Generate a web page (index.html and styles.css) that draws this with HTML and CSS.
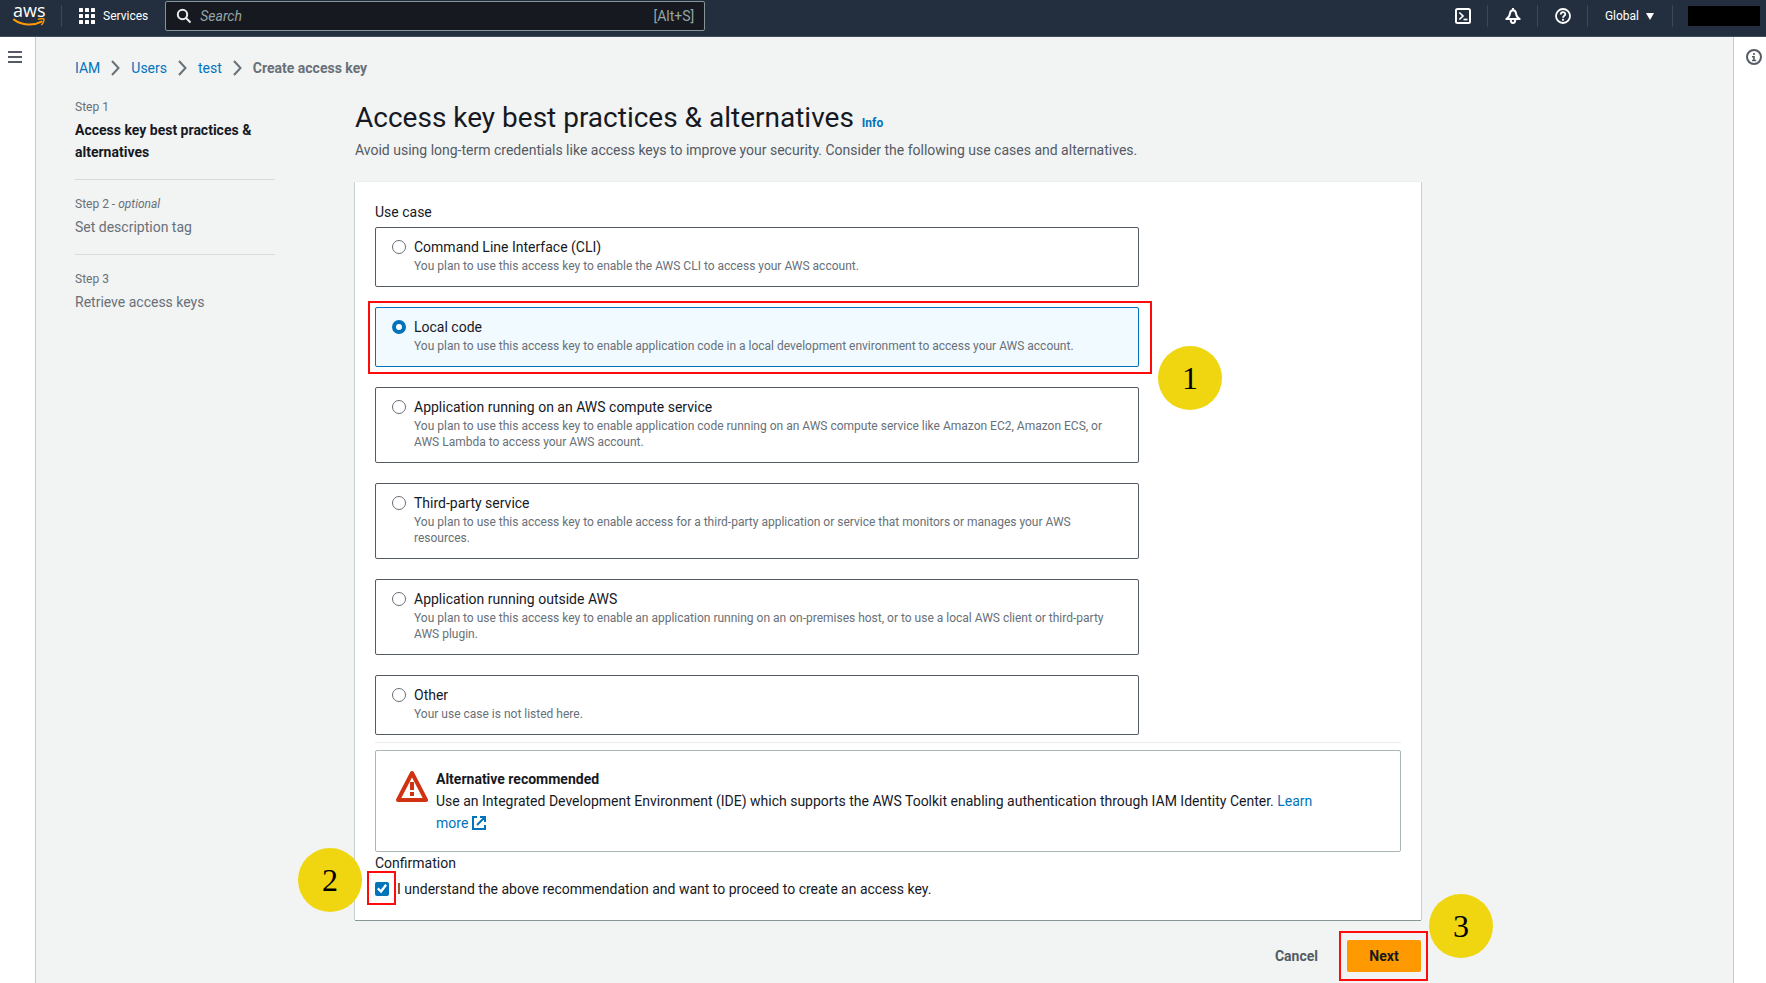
FILE: index.html
```html
<!DOCTYPE html>
<html lang="en">
<head>
<meta charset="utf-8">
<meta name="viewport" content="width=device-width, initial-scale=1">
<title>Create access key | IAM</title>
<link rel="stylesheet" href="styles.css">
</head>
<body>
<header class="topbar">
  <a class="logo" href="#" aria-label="aws home">
    <span class="logo-text">aws</span>
    <svg class="logo-smile" width="32" height="9" viewBox="0 0 32 9" aria-hidden="true"><path d="M1 1.600C9 7.600 20.500 8 28.500 3.600" fill="none" stroke="#ff9900" stroke-width="2" stroke-linecap="round"/><path d="M25.500 1.200C28 .4 30.500.5 31 1.100C31.300 2.500 30 5.400 28.600 6.600" fill="none" stroke="#ff9900" stroke-width="1.400" stroke-linecap="round"/></svg>
  </a>
  <button class="services" type="button">
    <svg width="16" height="16" viewBox="0 0 16 16" fill="#fff" aria-hidden="true"><rect width="4" height="4" rx=".6"/><rect x="6" width="4" height="4" rx=".6"/><rect x="12" width="4" height="4" rx=".6"/><rect y="6" width="4" height="4" rx=".6"/><rect x="6" y="6" width="4" height="4" rx=".6"/><rect x="12" y="6" width="4" height="4" rx=".6"/><rect y="12" width="4" height="4" rx=".6"/><rect x="6" y="12" width="4" height="4" rx=".6"/><rect x="12" y="12" width="4" height="4" rx=".6"/></svg>
    <span>Services</span>
  </button>
  <label class="search">
    <svg width="16" height="16" viewBox="0 0 16 16" fill="none" stroke="#eaeded" stroke-width="2" aria-hidden="true"><circle cx="6.500" cy="6.500" r="4.700"/><path d="M10 10l4.500 4.500"/></svg>
    <input class="search-input" type="search" placeholder="Search" aria-label="Search">
    <span class="search-key">[Alt+S]</span>
  </label>
  <nav class="tools">
    <button class="tool" type="button" aria-label="CloudShell"><svg width="16" height="16" viewBox="0 0 16 16" fill="none" stroke="#fff" stroke-width="2"><rect x="1" y="1" width="14" height="14" rx="1.500"/><path d="M4.300 4.500L8 8l-3.700 3.500" stroke-width="1.700"/><path d="M8.500 11.500h4" stroke-width="1.700"/></svg></button>
    <button class="tool" type="button" aria-label="Notifications"><svg width="16" height="16" viewBox="0 0 16 16" fill="none" stroke="#fff" stroke-width="2" stroke-linejoin="round"><path d="M8 0v2"/><path d="M1.300 11C3.800 9.500 4.600 8 4.900 5.800C5.200 3.400 6.200 2.300 8 2.300S10.800 3.400 11.100 5.800C11.400 8 12.200 9.500 14.700 11z"/><path d="M5.800 12c0 4 4.400 4 4.400 0"/></svg></button>
    <button class="tool" type="button" aria-label="Help"><svg width="16" height="16" viewBox="0 0 16 16" fill="none" stroke="#fff" stroke-width="1.800"><circle cx="8" cy="8" r="7"/><path d="M5.700 6.500C5.700 3.300 10.300 3.300 10.300 6.200C10.300 7.800 8 7.600 8 9.700"/><path d="M8 10.800v1.900"/></svg></button>
    <button class="tool region" type="button"><span>Global</span><svg width="8" height="7" viewBox="0 0 8 7" fill="#fff" aria-hidden="true"><path d="M0 0h8L4 7z"/></svg></button>
    <span class="account"></span>
  </nav>
</header>
<div class="shell">
  <aside class="rail rail-left">
    <button class="icon-button" type="button" aria-label="Open navigation"><svg width="14" height="12" viewBox="0 0 14 12" stroke="#545b64" stroke-width="2"><path d="M0 1h14M0 6h14M0 11h14"/></svg></button>
  </aside>
  <main class="content">
    <nav class="crumbs" aria-label="Breadcrumbs">
      <a href="#">IAM</a>
      <svg class="chevron" width="9" height="16" viewBox="0 0 9 16"><path d="M1 1l6.500 7L1 15"/></svg>
      <a href="#">Users</a>
      <svg class="chevron" width="9" height="16" viewBox="0 0 9 16"><path d="M1 1l6.500 7L1 15"/></svg>
      <a href="#">test</a>
      <svg class="chevron" width="9" height="16" viewBox="0 0 9 16"><path d="M1 1l6.500 7L1 15"/></svg>
      <span class="crumb-current">Create access key</span>
    </nav>
    <div class="wizard">
      <ol class="steps">
        <li class="step step-active"><span class="step-no">Step 1</span><span class="step-name">Access key best practices &amp; alternatives</span></li>
        <li class="step"><span class="step-no">Step 2 - <i>optional</i></span><span class="step-name">Set description tag</span></li>
        <li class="step"><span class="step-no">Step 3</span><span class="step-name">Retrieve access keys</span></li>
      </ol>
      <form class="form">
        <div class="heading">
          <h1 class="title">Access key best practices &amp; alternatives</h1>
          <a class="info" href="#">Info</a>
        </div>
        <p class="subtitle">Avoid using long-term credentials like access keys to improve your security. Consider the following use cases and alternatives.</p>
        <section class="panel">
          <fieldset class="cases">
            <legend class="legend">Use case</legend>
            <div class="tiles">
              <label class="tile"><input class="radio" type="radio" name="case"><span class="tile-name">Command Line Interface (CLI)</span><span class="tile-text">You plan to use this access key to enable the AWS CLI to access your AWS account.</span></label>
              <label class="tile tile-selected"><input class="radio" type="radio" name="case" checked><span class="tile-name">Local code</span><span class="tile-text">You plan to use this access key to enable application code in a local development environment to access your AWS account.</span><span class="mark mark-tile"></span><span class="badge badge-one">1</span></label>
              <label class="tile"><input class="radio" type="radio" name="case"><span class="tile-name">Application running on an AWS compute service</span><span class="tile-text">You plan to use this access key to enable application code running on an AWS compute service like Amazon EC2, Amazon ECS, or<br>AWS Lambda to access your AWS account.</span></label>
              <label class="tile"><input class="radio" type="radio" name="case"><span class="tile-name">Third-party service</span><span class="tile-text">You plan to use this access key to enable access for a third-party application or service that monitors or manages your AWS<br>resources.</span></label>
              <label class="tile"><input class="radio" type="radio" name="case"><span class="tile-name">Application running outside AWS</span><span class="tile-text">You plan to use this access key to enable an application running on an on-premises host, or to use a local AWS client or third-party<br>AWS plugin.</span></label>
              <label class="tile"><input class="radio" type="radio" name="case"><span class="tile-name">Other</span><span class="tile-text">Your use case is not listed here.</span></label>
            </div>
          </fieldset>
          <hr class="rule">
          <div class="alert">
            <svg class="alert-icon" width="32" height="32" viewBox="0 0 32 32" aria-hidden="true"><path d="M16 3L30 30H2z" fill="none" stroke="#d13212" stroke-width="4" stroke-linejoin="round"/><path d="M14 12h4v8h-4zM14 22h4v4h-4z" fill="#d13212"/></svg>
            <div class="alert-body">
              <strong>Alternative recommended</strong>
              <p class="alert-text">Use an Integrated Development Environment (IDE) which supports the AWS Toolkit enabling authentication through IAM Identity Center. <a href="#">Learn<br>more <svg class="external" width="14" height="14" viewBox="0 0 14 14" fill="none" stroke="#0073bb" stroke-width="2" aria-hidden="true"><path d="M5 1H1v12h12V9M8 1h5v5M13 1L5 9"/></svg></a></p>
            </div>
          </div>
          <div class="confirm-title">Confirmation</div>
          <div class="confirm">
            <span class="confirm-box"><input class="check" id="agree" type="checkbox" checked><span class="mark mark-check"></span><span class="badge badge-two">2</span></span>
            <label for="agree">I understand the above recommendation and want to proceed to create an access key.</label>
          </div>
        </section>
        <div class="actions">
          <button class="button" type="button">Cancel</button>
          <span class="next-wrap"><button class="button button-primary" type="button">Next</button><span class="mark mark-next"></span><span class="badge badge-three">3</span></span>
        </div>
      </form>
    </div>
  </main>
  <aside class="rail rail-right">
    <button class="icon-button" type="button" aria-label="Open help panel"><svg width="16" height="16" viewBox="0 0 16 16" fill="none" stroke="#545b64" stroke-width="2"><circle cx="8" cy="8" r="7"/><path d="M8 4v2M6 7.800h2V12M6 11.500h4.200" stroke-width="1.600"/></svg></button>
  </aside>
</div>
</body>
</html>
```
FILE: styles.css
```css
* { box-sizing: border-box; }
body {
  margin: 0;
  min-height: 100vh;
  display: flex;
  flex-direction: column;
  background: #f2f3f3;
  color: #16191f;
  font: 14px/22px Roboto, "Liberation Sans", sans-serif;
}
button { font: inherit; color: inherit; background: none; border: 0; padding: 0; }
a { color: #0073bb; text-decoration: none; }
strong { font-weight: 700; }
svg { display: block; flex: none; }

.topbar {
  display: flex;
  align-items: center;
  height: 37px;
  padding: 0 6px 4px 13px;
  background: #232f3e;
  border-bottom: 1px solid #414d5c;
  color: #fff;
  font-size: 12px;
}
.logo { display: flex; flex-direction: column; width: 49px; height: 22px; border-right: 1px solid #414750; }
.logo-text { color: #fff; font: 400 18px/11px "Open Sans", sans-serif; height: 14px; }
.services { display: flex; align-items: center; gap: 8px; margin: 0 17px; }
.search {
  display: flex;
  align-items: center;
  gap: 8px;
  flex: 0 1 540px;
  height: 30px;
  padding: 0 10px;
  background: #16191f;
  border: 1px solid #879596;
  border-radius: 2px;
  color: #95a5a6;
  font-size: 14px;
}
.search-input { flex: 1; min-width: 0; border: 0; padding: 0; background: none; color: #fff; font: inherit; outline: 0; }
.search-input::placeholder { color: #95a5a6; font-style: italic; opacity: 1; }
.tools { display: flex; align-items: center; margin-left: auto; }
.tool { display: flex; align-items: center; height: 22px; padding: 0 16px 0 17px; border-right: 1px solid #414750; }
.region { gap: 7px; padding: 0 18px 0 17px; }
.account { width: 72px; height: 20px; margin-left: 15px; background: #000; }

.shell { display: flex; flex: 1; }
.rail { background: #fff; padding-top: 12px; }
.rail-left { width: 36px; padding-left: 8px; border-right: 1px solid #c4c9c9; }
.rail-right { width: 33px; padding-left: 12px; border-left: 1px solid #c4c9c9; }
.icon-button { display: flex; align-items: center; height: 16px; }
.content { flex: 1; min-width: 0; padding: 20px 40px 0 39px; }

.crumbs { display: flex; align-items: center; gap: 11px; }
.chevron { fill: none; stroke: #687078; stroke-width: 2; }
.crumb-current { color: #687078; font-weight: 700; }

.wizard { display: grid; grid-template-columns: 200px minmax(0, 1066px); column-gap: 80px; padding-top: 18px; }
.steps { list-style: none; margin: 0; padding: 2px 0 0; }
.step { display: flex; flex-direction: column; gap: 4px; color: #687078; padding-bottom: 16px; }
.step + .step { border-top: 1px solid #d5dbdb; padding-top: 16px; }
.step-no { font-size: 12px; line-height: 16px; }
.step-active .step-name { color: #16191f; font-weight: 700; }

.heading { display: flex; align-items: baseline; gap: 8px; }
.title { margin: 0; font-size: 28px; line-height: 42px; font-weight: 400; }
.info { font-size: 12px; line-height: 16px; font-weight: 700; }
.subtitle { margin: 0 0 21px; color: #545b64; }
.panel {
  background: #fff;
  padding: 19px 20px 20px;
  box-shadow: -1px 0 0 #c9cfcf, 1px 0 0 #c9cfcf, 0 -1px 0 #eaeded, 0 1px 0 #879596;
}
.cases { border: 0; margin: 0; padding: 0; min-width: 0; }
.legend { padding: 0; margin-bottom: 4px; }
.tiles { display: grid; gap: 20px; max-width: 764px; }
.tile {
  position: relative;
  display: grid;
  grid-template-columns: 14px 1fr;
  column-gap: 8px;
  align-items: center;
  padding: 8px 8px 12px 16px;
  border: 1px solid #545b64;
  border-radius: 2px;
}
.tile-selected { background: #f1faff; border-color: #0073bb; }
.tile-text { grid-column: 2; color: #687078; font-size: 12px; line-height: 16px; }
.radio { appearance: none; width: 14px; height: 14px; margin: 0; border: 1px solid #687078; border-radius: 50%; background: #fff; }
.radio:checked { border: 4px solid #0073bb; }
.rule { margin: 7px 0; border: 0; border-top: 1px solid #eaeded; }
.alert { display: flex; gap: 8px; padding: 17px 20px; border: 1px solid #aab7b8; border-radius: 2px; }
.alert-icon { margin-top: 2px; }
.alert-text { margin: 0; }
.external { display: inline-block; vertical-align: -2px; }
.confirm-title { color: #16191f; }
.confirm { display: flex; align-items: center; gap: 8px; margin-top: 4px; }
.confirm-box { position: relative; display: flex; }
.check {
  appearance: none;
  width: 14px;
  height: 14px;
  margin: 0;
  border-radius: 2px;
  background: #0073bb;
  display: grid;
  place-items: center;
}
.check:checked::before { content: ""; width: 10px; height: 10px; background: #fff; clip-path: polygon(0 52%, 16% 36%, 38% 58%, 82% 0, 100% 14%, 42% 92%); }

.actions { display: flex; justify-content: flex-end; gap: 9px; margin-top: 20px; }
.button { height: 32px; padding: 0 20px; font-weight: 700; color: #545b64; }
.button-primary { min-width: 74px; background: #ff9900; color: #16191f; border-radius: 2px; }
.next-wrap { position: relative; display: flex; }

.mark { position: absolute; border: 2px solid #ff0b0b; pointer-events: none; }
.mark-tile { inset: -7px -14px -8px -8px; }
.mark-check { inset: -11px -7px -9px -8px; }
.mark-next { inset: -9px -7px -9px -8px; }
.badge {
  position: absolute;
  display: grid;
  place-items: center;
  width: 64px;
  height: 64px;
  border-radius: 50%;
  background: #efd611;
  color: #000;
  font: 32px/32px "Liberation Serif", serif;
}
.badge-one { left: 782px; top: 38px; }
.badge-two { right: 27px; top: -34px; }
.badge-three { left: 82px; top: -46px; }
```
